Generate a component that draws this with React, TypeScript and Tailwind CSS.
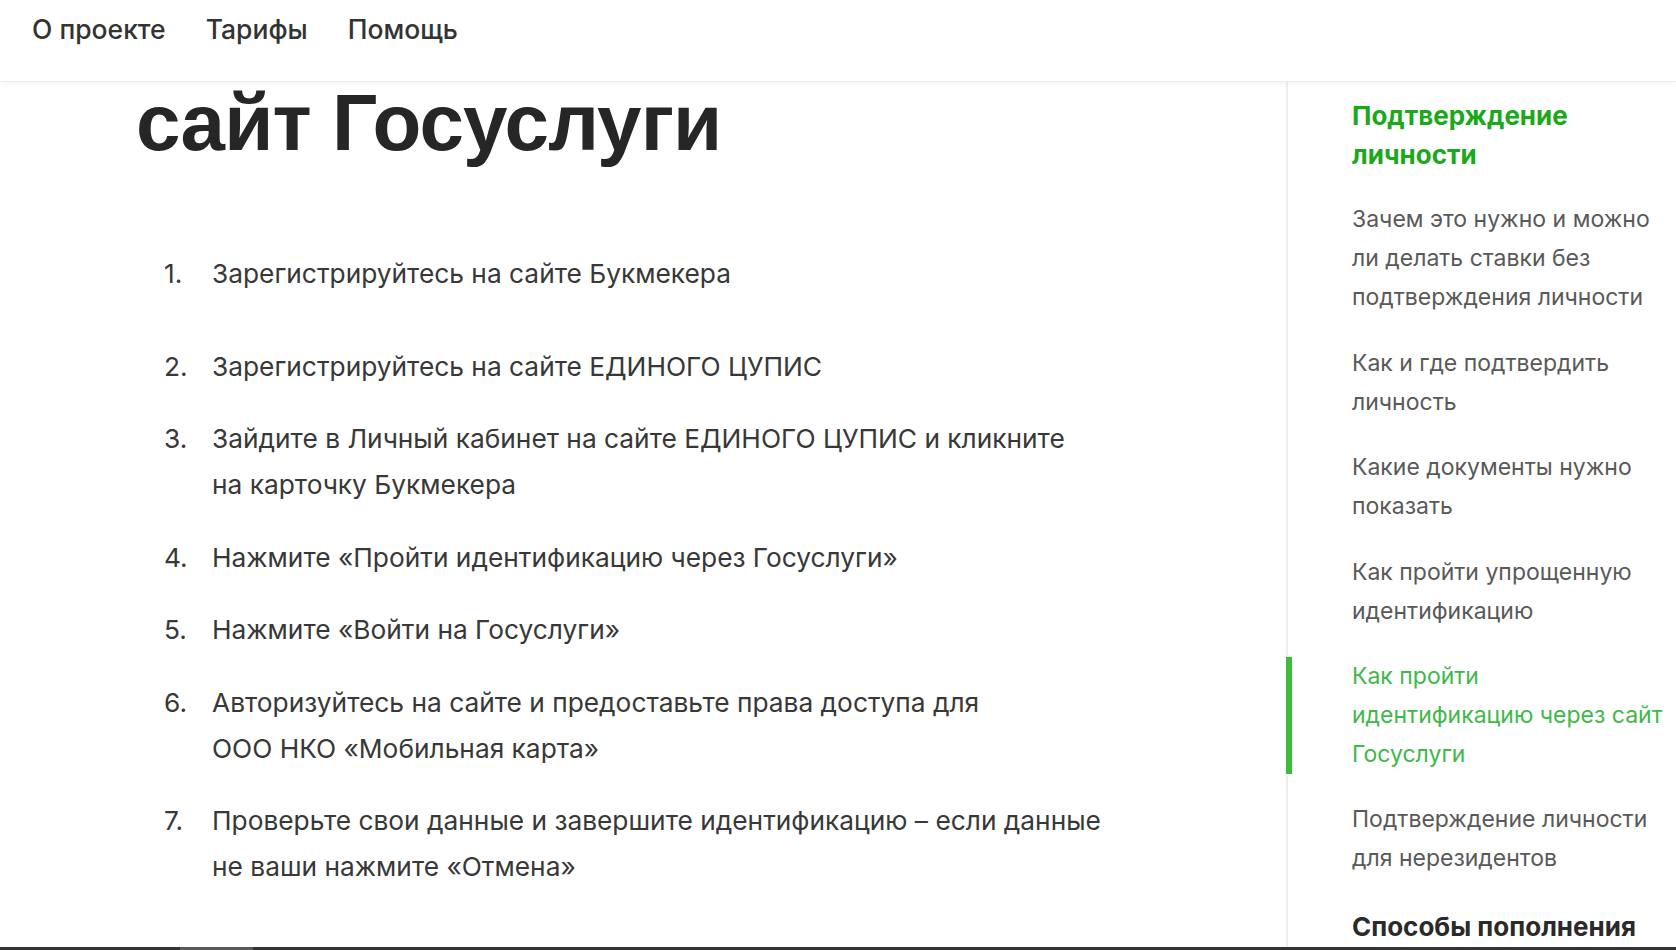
import React from 'react';

const navLinks = ['О проекте', 'Тарифы', 'Помощь'];

// each step: lines are split by hand, as on the page
const steps: string[][] = [
    ['Зарегистрируйтесь на сайте Букмекера'],
    ['Зарегистрируйтесь на сайте ЕДИНОГО ЦУПИС'],
    ['Зайдите в Личный кабинет на сайте ЕДИНОГО ЦУПИС и кликните', 'на карточку Букмекера'],
    ['Нажмите «Пройти идентификацию через Госуслуги»'],
    ['Нажмите «Войти на Госуслуги»'],
    ['Авторизуйтесь на сайте и предоставьте права доступа для', 'ООО НКО «Мобильная карта»'],
    ['Проверьте свои данные и завершите идентификацию – если данные', 'не ваши нажмите «Отмена»'],
];

const tocItems: { lines: string[]; active?: boolean }[] = [
    { lines: ['Зачем это нужно и можно', 'ли делать ставки без', 'подтверждения личности'] },
    { lines: ['Как и где подтвердить', 'личность'] },
    { lines: ['Какие документы нужно', 'показать'] },
    { lines: ['Как пройти упрощенную', 'идентификацию'] },
    { lines: ['Как пройти', 'идентификацию через сайт', 'Госуслуги'], active: true },
    { lines: ['Подтверждение личности', 'для нерезидентов'] },
];

const App: React.FC = () => {
    return (
        <div className="relative flex flex-col h-[950px] overflow-hidden bg-white font-['Inter',sans-serif]">
            {/* Top bar */}
            <header className="relative z-10 h-[82px] shrink-0 bg-white border-b border-[#ececec] shadow-[0_2px_8px_rgba(0,0,0,0.05)]">
                <nav className="flex items-center gap-[40px] pl-[32px] h-[60px]">
                    {navLinks.map((link) => (
                        <a key={link} href="#" className="text-[26.5px] font-medium text-[#333333]">
                            {link}
                        </a>
                    ))}
                </nav>
            </header>

            <div className="flex flex-1 min-h-0">
                {/* Article */}
                <main className="w-[1286px] shrink-0 pl-[136px]">
                    <h1 className="-mt-[4px] font-['Liberation_Sans',Arial,sans-serif] font-bold text-[80px] leading-[90px] tracking-[-0.9px] text-[#262626]">
                        сайт Госуслуги
                    </h1>

                    <ol className="mt-[83px] ml-[28px] flex flex-col gap-[26.5px] text-[26.3px] leading-[46px] text-[#383838]">
                        {steps.map((lines, i) => (
                            <li key={i} className={`flex ${i === 0 ? 'mb-[20px]' : ''}`}>
                                <span className="w-[48px] shrink-0">{i + 1}.</span>
                                <span className="whitespace-nowrap">
                                    {lines.map((l, j) => (
                                        <span key={j} className="block">{l}</span>
                                    ))}
                                </span>
                            </li>
                        ))}
                    </ol>
                </main>

                {/* Table of contents */}
                <aside className="flex-1 border-l-2 border-[#efefef] pt-[14px] pl-[64px] pr-[4px]">
                    <div className="flex flex-col gap-[26.4px]">
                        <h3 className="text-[26px] leading-[39px] font-bold text-[#1ba81b]">
                            Подтверждение
                            <br />
                            личности
                        </h3>
                        {tocItems.map((item) => (
                            <div key={item.lines[0] + item.lines.length} className="relative">
                                {item.active && (
                                    <span className="absolute -left-[66px] top-0 bottom-0 w-[6px] bg-[#3cbb3c]" />
                                )}
                                <a
                                    href="#"
                                    className={`block whitespace-nowrap text-[23px] leading-[39px] ${item.active ? 'text-[#3fb84a]' : 'text-[#595959]'}`}
                                >
                                    {item.lines.map((l) => (
                                        <span key={l} className="block">{l}</span>
                                    ))}
                                </a>
                            </div>
                        ))}
                        <h3 className="mt-[2px] text-[26px] leading-[39px] font-bold text-[#2a2a2a] whitespace-nowrap">
                            Способы пополнения
                        </h3>
                    </div>
                </aside>
            </div>

            {/* bottom scroll strip */}
            <div className="absolute left-0 right-0 bottom-0 h-[3px] bg-[#333333]">
                <div className="ml-[180px] w-[73px] h-full bg-[#5a5a5a]" />
            </div>
        </div>
    );
};

export default App;
